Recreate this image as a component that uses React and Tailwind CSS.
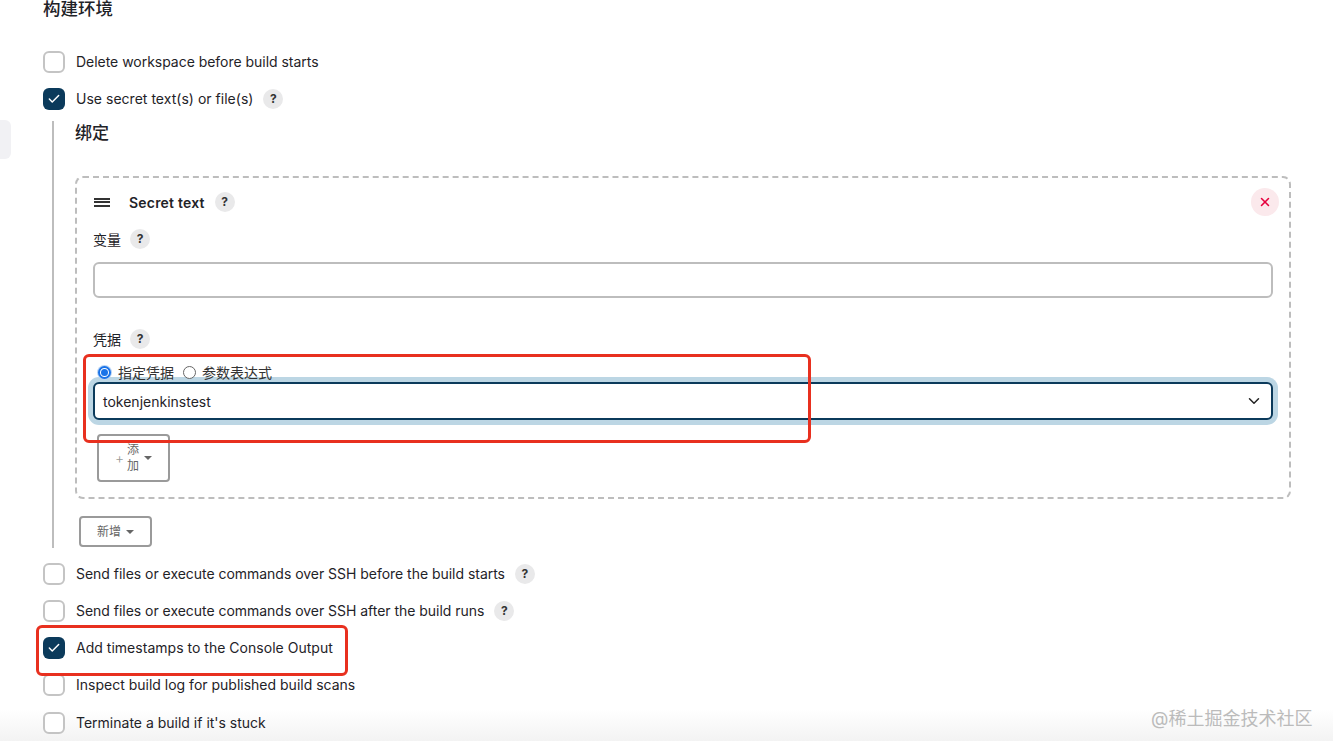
import React from 'react';
import { Check, ChevronDown, X } from 'lucide-react';

const font = { fontFamily: 'Inter, "Noto Sans CJK SC", sans-serif' };

function Help({ className = 'ml-[10px]' }) {
  return (
    <span className={`flex h-5 w-5 shrink-0 items-center justify-center rounded-full bg-[#e9e9ea] text-[12px] font-bold text-[#333] ${className}`}>
      ?
    </span>
  );
}

function CheckRow({ label, checked, help, track = 'tracking-[0.02px]', className = '' }) {
  return (
    <div className={`relative flex h-[22px] items-center ${className}`}>
      <span
        className={`flex h-[22px] w-[22px] shrink-0 items-center justify-center rounded-[6px] ${
          checked ? 'bg-[#0b3a5b]' : 'border-2 border-[#c4c4c4] bg-white'
        }`}
      >
        {checked && <Check size={14} strokeWidth={2.5} className="text-white" />}
      </span>
      <span className={`-mt-[2px] ml-[11px] text-[14px] text-[#1f2328] ${track}`}>
        {label}
      </span>
      {help && <Help />}
    </div>
  );
}

function FieldLabel({ children }) {
  return (
    <div className="flex h-5 items-center">
      <span className="text-[14px] text-[#1f2328]">{children}</span>
      <Help className="ml-[9px]" />
    </div>
  );
}

function Radio({ checked, children, labelClass = 'ml-[7px]' }) {
  return (
    <label className="flex items-center">
      {checked ? (
        <span className="flex h-[13px] w-[13px] items-center justify-center rounded-full border-2 border-[#1a73e8] bg-white shadow-[0_0_0_1px_#b8d4f5]">
          <span className="h-[7px] w-[7px] rounded-full bg-[#1a73e8]" />
        </span>
      ) : (
        <span className="h-[13px] w-[13px] rounded-full border border-[#666] bg-white" />
      )}
      <span className={`text-[14px] text-[#333] ${labelClass}`}>{children}</span>
    </label>
  );
}

function Caret() {
  return (
    <span className="h-0 w-0 border-x-[4px] border-t-[4px] border-x-transparent border-t-[#666]" />
  );
}

export default function App() {
  return (
    <div style={font} className="relative h-[749px] overflow-hidden bg-white pl-[43px]">
      {/* left edge of the sidebar */}
      <div className="absolute left-0 top-[120px] h-[39px] w-[11px] rounded-r-[6px] bg-[#f1f1f4]" />

      {/* bottom bar shade sits behind the rows */}
      <div className="pointer-events-none absolute inset-x-0 bottom-[8px] h-[32px] bg-gradient-to-b from-white/0 to-[#f3f3f3]" />

      <h2 className="h-[51px] text-[17.5px] font-medium leading-[17px] text-[#1f2328]">构建环境</h2>

      <CheckRow label="Delete workspace before build starts" track="tracking-[-0.03px]" />
      <CheckRow label="Use secret text(s) or file(s)" checked help className="mt-[15px]" />

      <div className="mt-[11px] ml-[9px] h-[427px] w-[1238px] border-l-2 border-[#bdbdbd] pl-[22px]">
        <h3 className="-ml-px pt-[2px] text-[17px] font-medium leading-[20px] text-[#1f2328]">绑定</h3>

        <div className="-ml-px mt-[33px] h-[323px] w-[1216px] rounded-[8px] border-2 border-dashed border-[#bdbdbd] pl-[16px] pr-[15px] pt-[14px]">
          <div className="flex h-5 items-center">
            <span className="ml-px flex w-[35px] flex-col gap-[1.5px]">
              <span className="h-[2px] w-4 bg-[#333]" />
              <span className="h-[2px] w-4 bg-[#333]" />
              <span className="h-[2px] w-4 bg-[#333]" />
            </span>
            <span className="text-[14px] font-semibold tracking-[0.2px] text-[#1f2328]">Secret text</span>
            <Help />
            <span className="ml-auto mr-[-5px] -mt-px flex h-7 w-7 items-center justify-center rounded-full bg-[#fbe9ec]">
              <X size={14} strokeWidth={2.6} className="text-[#e6003d]" />
            </span>
          </div>

          <div className="mt-[17px]">
            <FieldLabel>变量</FieldLabel>
          </div>
          <div className="mt-[13px] h-[36px] w-[1180px] rounded-[6px] border-2 border-[#bdbdbd] bg-white" />

          <div className="mt-[31px]">
            <FieldLabel>凭据</FieldLabel>
          </div>
          <div className="mt-[14px] flex h-[18px] items-center gap-[9px] pl-[5px]">
            <Radio checked>指定凭据</Radio>
            <Radio labelClass="ml-[6px]">参数表达式</Radio>
          </div>
          <div className="mt-px flex h-[38px] w-[1180px] items-center justify-between rounded-[6px] border-2 border-[#0b3a5b] bg-white px-[8px] shadow-[0_0_0_5px_#bcd6e4]">
            <span className="mt-px text-[14px] text-[#1f2328]">tokenjenkinstest</span>
            <ChevronDown size={18} strokeWidth={2} className="text-[#222]" />
          </div>
          <button className="ml-[4px] mt-[14px] flex h-[48px] w-[73px] items-center justify-center rounded-[4px] border-2 border-[#9a9a9a] bg-white text-[#666]">
            <span className="text-[14px] font-light leading-none text-[#999]">+</span>
            <span className="ml-[2px] mr-[4px] w-[14px] text-center text-[12px] leading-[16px]">添加</span>
            <Caret />
          </button>
        </div>

        <button className="ml-[3px] mt-[17px] flex h-[31px] w-[73px] items-center justify-center gap-[5px] rounded-[4px] border-2 border-[#9a9a9a] bg-white text-[12px] text-[#666]">
          新增
          <Caret />
        </button>
      </div>

      <CheckRow label="Send files or execute commands over SSH before the build starts" help track="tracking-[-0.03px]" className="mt-[15px]" />
      <CheckRow label="Send files or execute commands over SSH after the build runs" help track="tracking-[-0.03px]" className="mt-[15px]" />
      <CheckRow label="Add timestamps to the Console Output" checked className="mt-[15px]" />
      <CheckRow label="Inspect build log for published build scans" track="tracking-normal" className="mt-[15px]" />
      <CheckRow label="Terminate a build if it's stuck" track="tracking-normal" className="mt-[16px]" />

      {/* annotations drawn on the screenshot */}
      <div className="pointer-events-none absolute left-[83px] top-[354px] h-[89px] w-[728px] rounded-[6px] border-[3px] border-[#e8301f]" />
      <div className="pointer-events-none absolute left-[36px] top-[625px] h-[51px] w-[312px] rounded-[6px] border-[3px] border-[#e8301f]" />
      <div className="absolute left-[1151px] top-[705px] text-[18px] text-[#bbbbbb]">@稀土掘金技术社区</div>
    </div>
  );
}
